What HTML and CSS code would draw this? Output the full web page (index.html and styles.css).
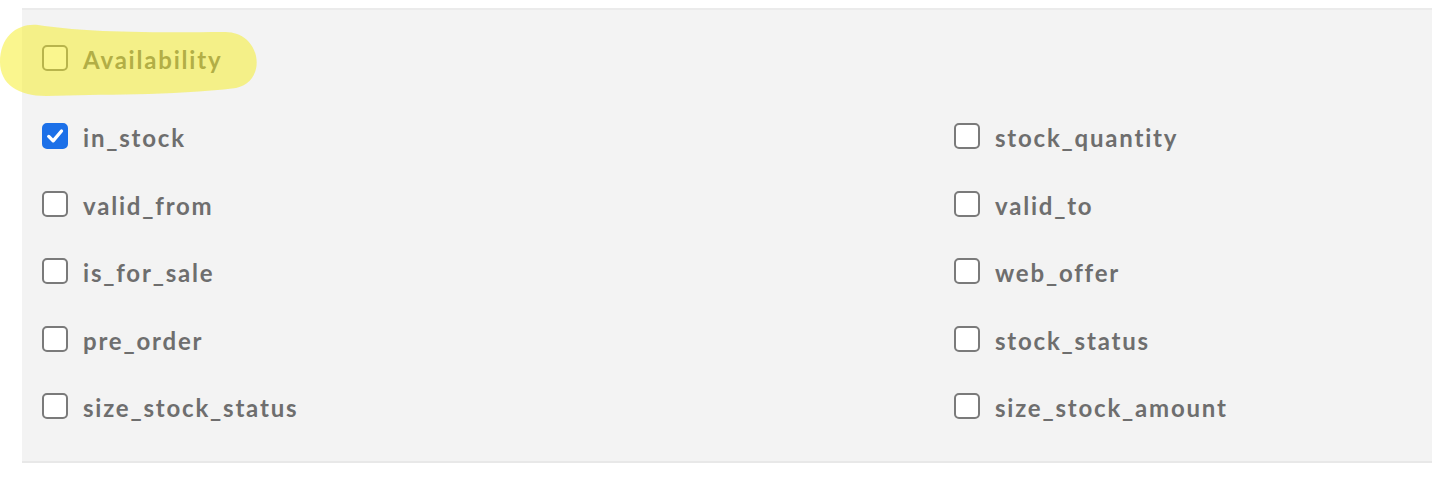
FILE: index.html
```html
<!DOCTYPE html>
<html>
<head>
<meta charset="utf-8">
<link rel="stylesheet" href="styles.css">
</head>
<body>
<section class="panel">
  <div class="heading">
    <label class="item"><span class="box"></span><span class="label">Availability</span></label>
    <svg class="marker" width="262" height="76" viewBox="0 0 262 76" aria-hidden="true">
      <path d="M38 1 C 80 7, 120 9, 224 8 C 262 7, 268 58, 236 64 C 170 72, 100 70, 46 72 C 18 72, 0 60, 0 38 C 0 12, 18 -1, 38 1 Z" fill="rgb(246,238,30)" fill-opacity="0.5"/>
    </svg>
  </div>
  <div class="grid">
    <label class="item"><span class="box checked"><svg viewBox="0 0 24 24" width="20" height="20"><path d="M4.5 12.5 L9.8 17.8 L19.8 6" fill="none" stroke="#fff" stroke-width="4" stroke-linecap="round" stroke-linejoin="round"/></svg></span><span class="label">in_stock</span></label>
    <label class="item"><span class="box"></span><span class="label">stock_quantity</span></label>
    <label class="item"><span class="box"></span><span class="label">valid_from</span></label>
    <label class="item"><span class="box"></span><span class="label">valid_to</span></label>
    <label class="item"><span class="box"></span><span class="label">is_for_sale</span></label>
    <label class="item"><span class="box"></span><span class="label">web_offer</span></label>
    <label class="item"><span class="box"></span><span class="label">pre_order</span></label>
    <label class="item"><span class="box"></span><span class="label">stock_status</span></label>
    <label class="item"><span class="box"></span><span class="label">size_stock_status</span></label>
    <label class="item"><span class="box"></span><span class="label">size_stock_amount</span></label>
  </div>
</section>
</body>
</html>
```
FILE: styles.css
```css
html, body {
  margin: 0;
  padding: 0;
  background: #ffffff;
}
body {
  font-family: Lato, "Open Sans", sans-serif;
}
.panel {
  margin: 8px 0 0 22px;
  background: #f3f3f3;
  border-top: 2px solid #ebebeb;
  border-bottom: 2px solid #e8e8e8;
  padding: 32px 0 35px 20px;
}
.heading {
  position: relative;
  height: 36px;
  margin-bottom: 42px;
}
.marker {
  position: absolute;
  left: -42px;
  top: -18px;
  pointer-events: none;
}
.grid {
  display: grid;
  grid-template-columns: 912px 1fr;
  row-gap: 31.5px;
}
.item {
  display: flex;
  align-items: center;
  gap: 15px;
  height: 36px;
}
.box {
  box-sizing: border-box;
  width: 26px;
  height: 26px;
  border: 2px solid #7a7a7a;
  border-radius: 5px;
  background: #ffffff;
  display: flex;
  align-items: center;
  justify-content: center;
  flex: none;
  margin-top: -4px;
}
.box.checked {
  background: #1c70e8;
  border-color: #1c70e8;
}
.label {
  font-size: 24px;
  font-weight: 700;
  color: #6e6e6e;
  letter-spacing: 1.8px;
  line-height: 36px;
}
```
